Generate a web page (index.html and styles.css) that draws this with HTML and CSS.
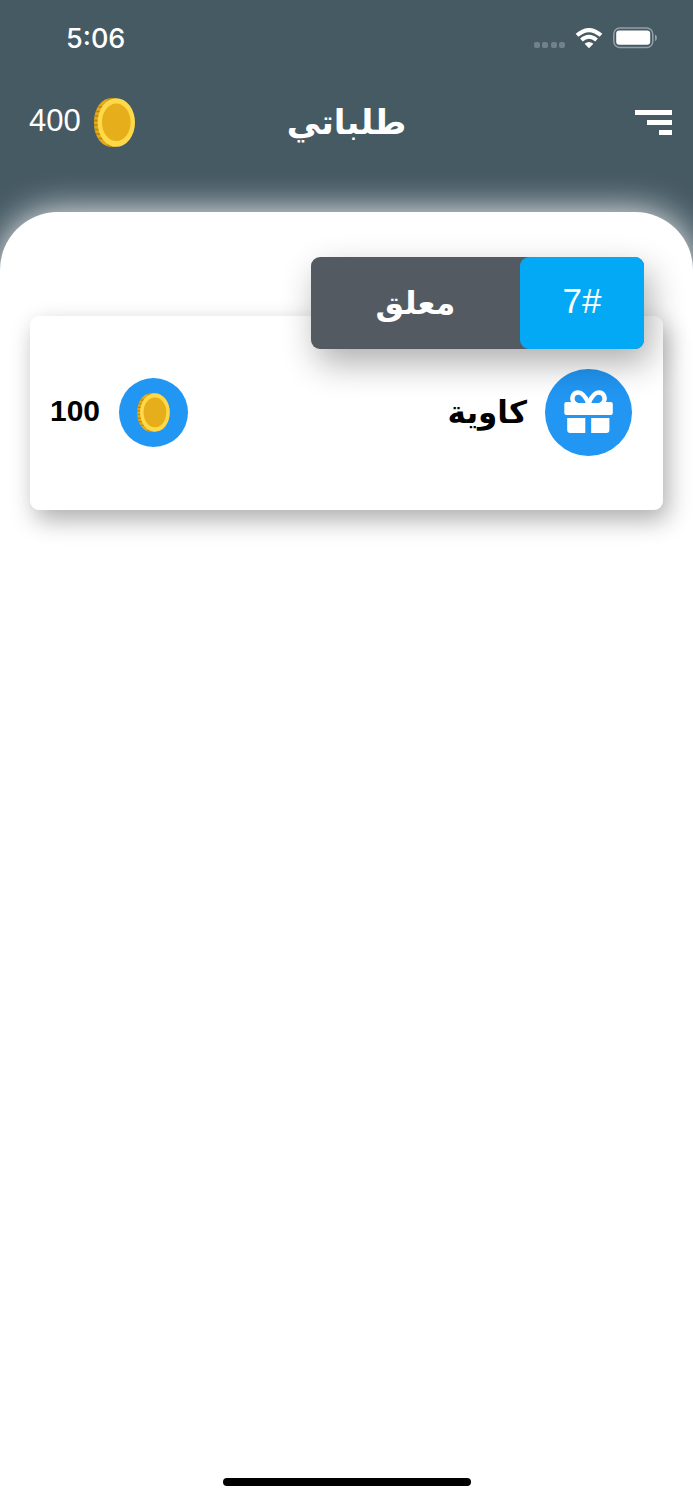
FILE: index.html
```html
<!DOCTYPE html>
<html lang="ar">
<head>
  <meta charset="UTF-8" />
  <meta name="viewport" content="width=device-width, initial-scale=1" />
  <title>طلباتي</title>
  <link rel="stylesheet" href="styles.css">
</head>

<body>
  <!-- Shared icons -->
  <svg class="sprite" width="0" height="0">
    <symbol id="coin" viewBox="0 0 41 49">
      <path d="M22 0.300H16C7 1 0 11 0 24.500S7 48 16 48.700H22Z" fill="#e2a91b" />
      <path d="M0.500 18h5M0 22.500h5M0 27h5M0.500 31.500h5M2 36h5M2 13.500h5M4.500 40.500h5M4.500 9h5" stroke="#b98410" stroke-width="1.400" />
      <path d="M12 2Q16 0 21 0.300L15 3ZM12 47Q16 49 21 48.700L15 46Z" fill="#c08a12" />
      <ellipse cx="22.300" cy="24.500" rx="18.700" ry="24.300" fill="#ffd947" />
      <ellipse cx="22.300" cy="24.300" rx="14.300" ry="18.800" fill="#e5ae1a" />
    </symbol>
  </svg>

  <div class="app">

    <!-- Status Bar -->
    <div class="status-bar">
      <span class="time">5:06</span>
      <div class="status-icons">
        <div class="signal"><i></i><i></i><i></i><i></i></div>
        <svg class="wifi" width="28" height="21" viewBox="0 0 28 21">
          <g fill="none" stroke="#fff" stroke-width="4">
            <path d="M2 7.300Q14 -3.200 26 7.300" />
            <path d="M6.400 12Q14 5.600 21.600 12" />
          </g>
          <path d="M9.600 15.800Q14 12.200 18.400 15.800L14 20.200Z" fill="#fff" />
        </svg>
        <svg class="battery" width="44" height="22" viewBox="0 0 44 22">
          <rect x="0.800" y="1" width="39" height="19.500" rx="6" fill="none" stroke="#94a0a6" stroke-width="1.500" />
          <rect x="3.200" y="3.500" width="34" height="14.300" rx="3" fill="#fff" />
          <path d="M42 7.500Q44 8.500 44 10.800Q44 13.100 42 14.200Z" fill="#94a0a6" />
        </svg>
      </div>
    </div>

    <!-- App Header -->
    <div class="header">
      <div class="balance">
        <span>400</span>
        <svg class="coin" width="41" height="49"><use href="#coin" /></svg>
      </div>
      <h1 class="title" dir="rtl">طلباتي</h1>
      <div class="menu"><i></i><i></i><i></i></div>
    </div>

    <!-- Orders -->
    <div class="sheet">
      <div class="order-card">
        <div class="order-tag">
          <span class="status" dir="rtl">معلق</span>
          <span class="number">7#</span>
        </div>
        <div class="price">
          <span>100</span>
          <div class="circle small">
            <svg width="33" height="39"><use href="#coin" /></svg>
          </div>
        </div>
        <div class="product">
          <span class="name" dir="rtl">كاوية</span>
          <div class="circle">
            <svg class="gift" width="49" height="43" viewBox="0 0 49 43">
              <g fill="none" stroke="#fff" stroke-width="4.400">
                <path d="M24.500 13C21 6 18 2.500 14.500 2.500C8.500 2.500 6.500 9 10.500 13.500" />
                <path d="M24.500 13C28 6 31 2.500 34.500 2.500C40.500 2.500 42.500 9 38.500 13.500" />
              </g>
              <path d="M0.300 14Q0.300 12 2.300 12H12.500L14 13H21L24.500 10L28 13H35L36.500 12H46.800Q48.800 12 48.800 14V23Q48.800 25 46.800 25H2.300Q0.300 25 0.300 23Z" fill="#fff" />
              <path d="M3.200 28H21.300V43H6.200Q3.200 43 3.200 40Z" fill="#fff" />
              <path d="M27.200 28H45.400V40Q45.400 43 42.400 43H27.200Z" fill="#fff" />
            </svg>
          </div>
        </div>
      </div>
      <div class="home-indicator"></div>
    </div>

  </div>
</body>
</html>
```
FILE: styles.css
```css
:root {
  --header-bg: #465a64;
  --blue: #2196f3;
  --tag-blue: #03a9f4;
}

* { box-sizing: border-box; margin: 0; padding: 0; }
body {
  font-family: "Liberation Sans", "DejaVu Sans", sans-serif;
  background: var(--header-bg);
  color: #000;
}
svg { display: block; }
.sprite { position: absolute; }

.app {
  display: flex; flex-direction: column;
  height: 1500px;
  overflow: hidden;
}

/* Status Bar */
.status-bar {
  display: flex; justify-content: space-between; align-items: center;
  height: 76px;
  padding: 0 36px 0 66px;
  color: #fff;
}
.time { font-family: Inter, sans-serif; font-size: 27px; font-weight: 500; }
.status-icons { display: flex; align-items: center; }
.signal { display: flex; gap: 2.4px; margin: 14px 10px 0 0; }
.signal i { width: 6px; height: 6px; border-radius: 2px; background: #71828a; }
.battery { margin-left: 10px; }

/* App Header */
.header {
  display: grid; grid-template-columns: 1fr auto 1fr; align-items: center;
  height: 92px;
  padding: 0 21px;
  color: #fff;
}
.balance {
  display: flex; align-items: center; gap: 13px;
  margin-left: 8px;
  font-size: 31px;
}
.balance span { margin-top: -3px; }
.title {
  font-family: "DejaVu Sans", sans-serif;
  font-size: 34px; font-weight: 700; line-height: 44px;
}
.menu { display: flex; flex-direction: column; align-items: flex-end; gap: 5px; }
.menu i { height: 5px; width: 37px; background: #fff; }
.menu i:nth-child(2) { width: 25px; }
.menu i:nth-child(3) { width: 13px; }

/* Orders */
.sheet {
  flex: 1;
  display: flex; flex-direction: column; justify-content: space-between; align-items: center;
  margin-top: 44px;
  padding: 104px 30px 14px;
  background: #fff;
  border-radius: 58px 58px 0 0;
  box-shadow: 0 0 36px rgba(255,255,255,0.95);
}
.order-card {
  position: relative;
  display: flex; justify-content: space-between; align-items: center;
  width: 100%; height: 194px;
  padding: 0 31px 2px 20px;
  background: #fff;
  border-radius: 9px;
  box-shadow: 5px 10px 24px rgba(0,0,0,0.32);
}

/* number and status overlap the top edge of the card */
.order-tag {
  position: absolute; top: -59px; right: 19px;
  display: flex;
  width: 333px; height: 92px;
  color: #fff; background: #545a62;
  border-radius: 9px;
  box-shadow: 6px 14px 34px rgba(0,0,0,0.32);
}
.order-tag span { display: flex; justify-content: center; align-items: center; }
.status {
  flex: 1;
  font-family: "DejaVu Sans", sans-serif; font-size: 32px; font-weight: 700;
}
.number {
  width: 124px;
  padding-bottom: 5px;
  font-size: 35px;
  background: var(--tag-blue);
  border-radius: 9px;
}

.price, .product { display: flex; align-items: center; gap: 18px; }
.price { gap: 19px; }
.price span { font-size: 30px; font-weight: 700; margin-top: -3px; }
.name { font-family: "DejaVu Sans", sans-serif; font-size: 31px; font-weight: 700; }
.circle {
  display: flex; justify-content: center; align-items: center;
  width: 87px; height: 87px;
  background: var(--blue);
  border-radius: 50%;
}
.circle.small { width: 69px; height: 69px; }
.gift { margin-bottom: 2px; }

.home-indicator { width: 248px; height: 8px; border-radius: 4px; background: #000; }
```
